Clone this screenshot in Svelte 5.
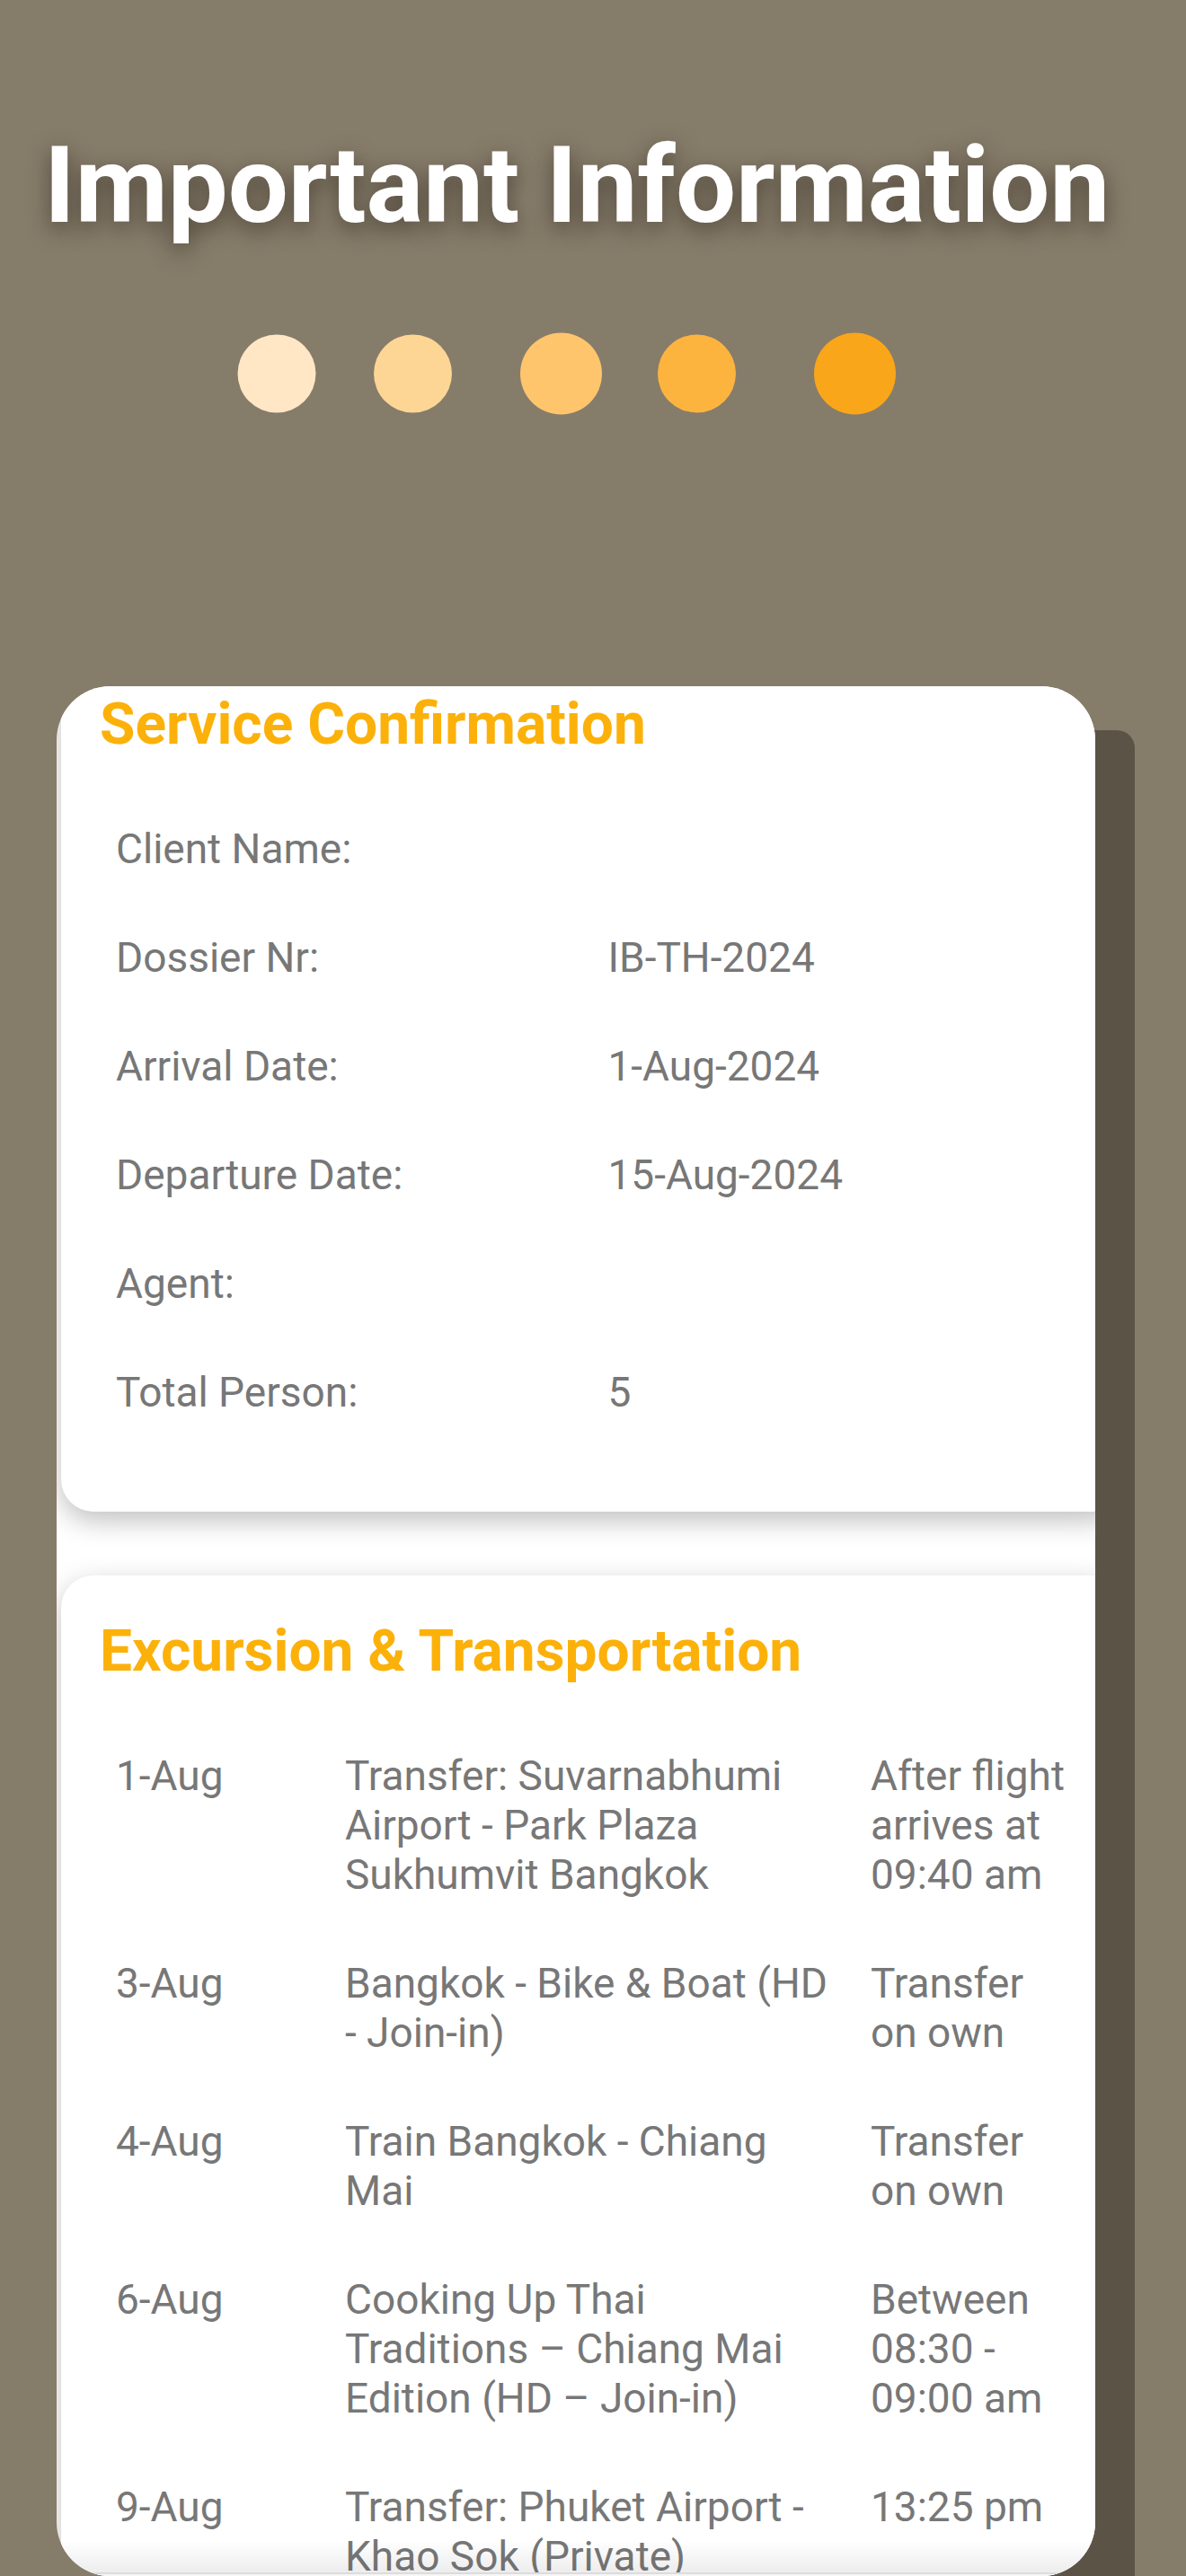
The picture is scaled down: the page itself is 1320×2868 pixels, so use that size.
<script>
  let details = [
    { label: 'Client Name:', value: '' },
    { label: 'Dossier Nr:', value: 'IB-TH-2024' },
    { label: 'Arrival Date:', value: '1-Aug-2024' },
    { label: 'Departure Date:', value: '15-Aug-2024' },
    { label: 'Agent:', value: '' },
    { label: 'Total Person:', value: '5' }
  ];

  let excursions = [
    { date: '1-Aug', title: 'Transfer: Suvarnabhumi Airport - Park Plaza Sukhumvit Bangkok', time: 'After flight arrives at 09:40 am' },
    { date: '3-Aug', title: 'Bangkok - Bike & Boat (HD - Join-in)', time: 'Transfer on own' },
    { date: '4-Aug', title: 'Train Bangkok - Chiang Mai', time: 'Transfer on own' },
    { date: '6-Aug', title: 'Cooking Up Thai Traditions – Chiang Mai Edition (HD – Join-in)', time: 'Between 08:30 - 09:00 am' },
    { date: '9-Aug', title: 'Transfer: Phuket Airport - Khao Sok (Private)', time: '13:25 pm' }
  ];
</script>

<div class="page">
  <header>
    <h1>Important Information</h1>
    <svg class="dots" width="734" height="92" viewBox="0 0 734 92" aria-hidden="true">
      <circle cx="44" cy="46" r="43.5" fill="#ffe7c5" />
      <circle cx="195.5" cy="46" r="43.5" fill="#fdd695" />
      <circle cx="360.5" cy="46" r="45.5" fill="#fec56d" />
      <circle cx="511.5" cy="46" r="43.5" fill="#fcb43f" />
      <circle cx="687.5" cy="46" r="45.5" fill="#faa61a" />
    </svg>
  </header>

  <main>
    <div class="backdrop"></div>
    <div class="panel">
      <section class="first">
        <h2>Service Confirmation</h2>
        <table>
          <tbody>
            {#each details as row}
              <tr>
                <th scope="row">{row.label}</th>
                <td>{row.value}</td>
              </tr>
            {/each}
          </tbody>
        </table>
      </section>

      <section>
        <h2>Excursion &amp; Transportation</h2>
        <table>
          <colgroup>
            <col class="side">
            <col>
            <col class="side">
          </colgroup>
          <tbody>
            {#each excursions as trip}
              <tr>
                <th scope="row">{trip.date}</th>
                <td>{trip.title}</td>
                <td>{trip.time}</td>
              </tr>
            {/each}
          </tbody>
        </table>
      </section>
    </div>
  </main>
</div>

<style>
  :global(body) {
    background: #867c6a;
  }
  .page {
    display: flex;
    flex-direction: column;
    height: 100vh;
    overflow: hidden;
    font-family: Roboto, "Liberation Sans", sans-serif;
    background: #867c6a;
  }
  header {
    display: flex;
    flex-direction: column;
    align-items: center;
    gap: 92px;
    padding: 136px 60px 302px 24px;
  }
  h1 {
    margin: 0;
    font-size: 119px;
    line-height: 142px;
    font-weight: 700;
    color: #fff;
    white-space: nowrap;
    text-shadow: 0 8px 24px rgba(50, 42, 32, 0.65);
  }
  .dots {
    display: block;
    margin-right: 22px;
  }
  main {
    flex: 1;
    min-height: 0;
    display: grid;
    grid-template-rows: minmax(0, 1fr);
    padding: 0 57px 0 63px;
  }
  .backdrop,
  .panel {
    grid-area: 1 / 1;
  }
  .backdrop {
    margin: 49px 0 0 60px;
    border-radius: 20px 20px 0 0;
    background: #5c5347;
  }
  .panel {
    position: relative;
    min-width: 0;
    margin-right: 44px;
    overflow: hidden;
    border-radius: 60px;
    background: #fff;
  }
  /* fade over the rows that run under the lower edge */
  .panel::after {
    content: "";
    position: absolute;
    left: 0;
    right: 0;
    bottom: 0;
    height: 40px;
    border-bottom: 2px solid #f6f6f6;
    box-sizing: border-box;
    background: linear-gradient(rgba(0, 0, 0, 0), rgba(0, 0, 0, 0.07) 36px, #dcdcdc 36px);
  }
  section {
    margin: 0 -30px 71px 5px;
    padding: 42px 43px 72px;
    border-radius: 36px;
    background: #fff;
    box-shadow: 0 10px 30px rgba(0, 0, 0, 0.25);
  }
  section.first {
    padding-top: 0;
  }
  h2 {
    margin: 0 0 35px;
    font-size: 64px;
    line-height: 86px;
    font-weight: 700;
    color: #fcb10a;
  }
  table {
    width: 100%;
    table-layout: fixed;
    border-collapse: collapse;
  }
  .side {
    width: 255px;
  }
  th,
  td {
    padding: 33px 18px;
    font-size: 46px;
    line-height: 55px;
    font-weight: 400;
    text-align: left;
    vertical-align: top;
    color: #777;
  }
</style>
